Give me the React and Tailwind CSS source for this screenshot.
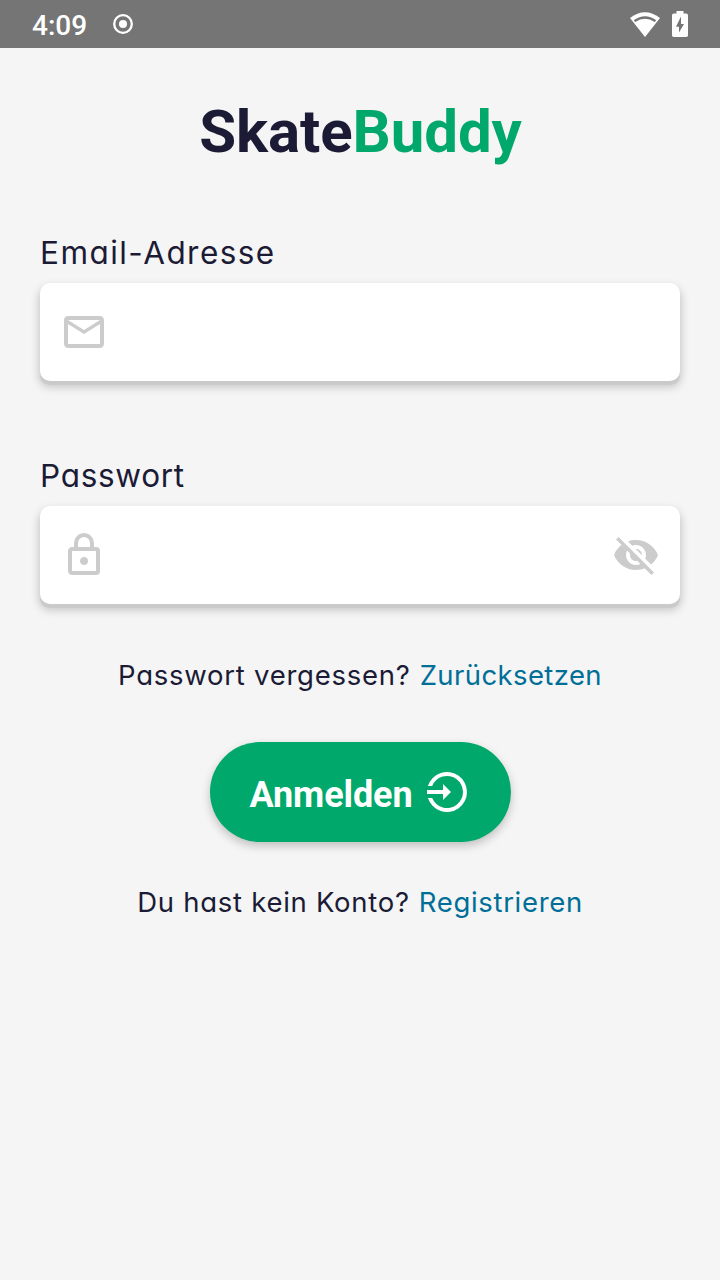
const textFace = "font-['Inter',sans-serif] [font-feature-settings:'cv11'] text-[#1b1b35]";

function MailIcon() {
  return (
    <svg viewBox="0 0 24 24" className="size-12 fill-[#ccc]">
      <path d="M22 6C22 4.9 21.1 4 20 4H4C2.9 4 2 4.9 2 6V18C2 19.1 2.9 20 4 20H20C21.1 20 22 19.1 22 18V6M20 6L12 11L4 6H20M20 18H4V8L12 13L20 8V18Z" />
    </svg>
  );
}

function LockIcon() {
  return (
    <svg viewBox="0 0 24 24" className="size-12 fill-[#ccc]">
      <path d="M12,17C10.89,17 10,16.1 10,15C10,13.89 10.89,13 12,13A2,2 0 0,1 14,15A2,2 0 0,1 12,17M18,20V10H6V20H18M18,8A2,2 0 0,1 20,10V20A2,2 0 0,1 18,22H6C4.89,22 4,21.1 4,20V10C4,8.89 4.89,8 6,8H7V6A5,5 0 0,1 12,1A5,5 0 0,1 17,6V8H18M12,3A3,3 0 0,0 9,6V8H15V6A3,3 0 0,0 12,3Z" />
    </svg>
  );
}

function EyeOffIcon() {
  return (
    <svg viewBox="0 0 24 24" className="size-12 fill-[#ccc]">
      <path d="M12 7c2.76 0 5 2.24 5 5 0 .65-.13 1.26-.36 1.83l2.92 2.92c1.51-1.26 2.7-2.89 3.43-4.75-1.73-4.39-6-7.5-11-7.5-1.4 0-2.74.25-3.98.7l2.16 2.16C10.74 7.13 11.35 7 12 7zM2 4.27l2.28 2.28.46.46C3.08 8.3 1.78 10.02 1 12c1.73 4.39 6 7.5 11 7.5 1.55 0 3.03-.3 4.38-.84l.42.42L19.73 22 21 20.73 3.27 3 2 4.27zM7.53 9.8l1.55 1.55c-.05.21-.08.43-.08.65 0 1.66 1.34 3 3 3 .22 0 .44-.03.65-.08l1.55 1.55c-.67.33-1.41.53-2.2.53-2.76 0-5-2.24-5-5 0-.79.2-1.53.53-2.2zm4.31-.78l3.15 3.15.02-.16c0-1.66-1.34-3-3-3l-.17.01z" />
    </svg>
  );
}

function EnterIcon() {
  return (
    <svg viewBox="0 0 24 24" className="size-12 fill-white">
      <path d="M2.46 9A10 10 0 1 1 2.46 15H4.58A8 8 0 1 0 4.58 9ZM2 11H10V8L14 12L10 16V13H2Z" />
    </svg>
  );
}

function StatusBar() {
  return (
    <header className="flex h-12 items-center bg-[#757575] pr-8 pl-8 text-white">
      <span className="mt-[3px] w-[55px] font-['Roboto',sans-serif] text-[28px] leading-8 font-medium">4:09</span>
      <svg viewBox="0 0 20 20" className="ml-[26px] size-5">
        <circle cx="10" cy="10" r="8.8" fill="none" stroke="currentColor" strokeWidth="2.3" />
        <circle cx="10" cy="10" r="4" fill="currentColor" />
      </svg>
      <svg viewBox="0 0 30 25" className="ml-auto h-[25px] w-[30px]">
        <path d="M0 6Q15 -5.5 30 6L15 25Z" fill="currentColor" />
        <path d="M3.8 8.2Q15 .4 26.2 8.2L24.8 10Q15 3.4 5.2 10Z" fill="#757575" />
      </svg>
      <svg viewBox="0 0 16 26" className="ml-3 h-[26px] w-4">
        <path d="M4.5 0H11.5V2.6H14.2Q16 2.6 16 4.4V24.2Q16 26 14.2 26H1.8Q0 26 0 24.2V4.4Q0 2.6 1.8 2.6H4.5Z" fill="currentColor" />
        <path d="M9 5.5V13H12L7 21.5V15.8H4Z" fill="#757575" />
      </svg>
    </header>
  );
}

function Field({ label, type, icon, trailing, spacing }) {
  return (
    <label className="block">
      <span className={`${textFace} block h-12 pt-px text-[31.5px] leading-[34px] font-normal ${spacing}`}>{label}</span>
      <span className="flex h-[98px] items-center rounded-[10px] bg-white px-5 shadow-[0_4px_1px_-0.5px_#cacaca,0_5px_10px_1px_rgba(0,0,0,0.2)]">
        {icon}
        <input type={type} aria-label={label} className="min-w-0 flex-1 bg-transparent px-3 text-3xl outline-none" />
        {trailing}
      </span>
    </label>
  );
}

function Hint({ question, action, first, second }) {
  return (
    <p className={`${textFace} flex justify-center gap-[9px] text-[27.5px] leading-9 font-normal whitespace-nowrap`}>
      <span className={first}>{question}</span>
      <a className={`text-[#006f98] ${second}`}>{action}</a>
    </p>
  );
}

export default function App() {
  return (
    <div className="h-[1280px] w-[720px] overflow-hidden bg-[#f5f5f5]">
      <StatusBar />
      <main className="flex flex-col px-10 pt-12">
        <h1 className="pl-px text-center font-['Roboto',sans-serif] text-[60px] leading-[72px] font-bold tracking-[-0.1px] text-[#1b1b35]">
          Skate<span className="text-[#00a86b]">Buddy</span>
        </h1>
        <form className="mt-[67px] flex flex-col gap-[77px]">
          <Field label="Email-Adresse" type="email" icon={<MailIcon />} spacing="tracking-[1.45px]" />
          <Field label="Passwort" type="password" icon={<LockIcon />} trailing={<EyeOffIcon />} spacing="tracking-[0.7px]" />
        </form>
        <div className="mt-[53px]">
          <Hint question="Passwort vergessen?" action="Zurücksetzen" first="tracking-[0.75px]" second="tracking-[0.4px]" />
        </div>
        <button className="mt-[49px] flex h-[100px] w-[301px] items-center self-center rounded-full bg-[#00a86b] pl-10 shadow-[0_4px_10px_rgba(0,0,0,0.22)]">
          <span className="mt-1.5 w-[173px] text-left font-['Roboto',sans-serif] text-[36px] leading-10 font-bold tracking-[-0.1px] text-white">Anmelden</span>
          <EnterIcon />
        </button>
        <div className="mt-[42px]">
          <Hint question="Du hast kein Konto?" action="Registrieren" first="tracking-[0.73px]" second="tracking-[0.67px]" />
        </div>
      </main>
    </div>
  );
}
